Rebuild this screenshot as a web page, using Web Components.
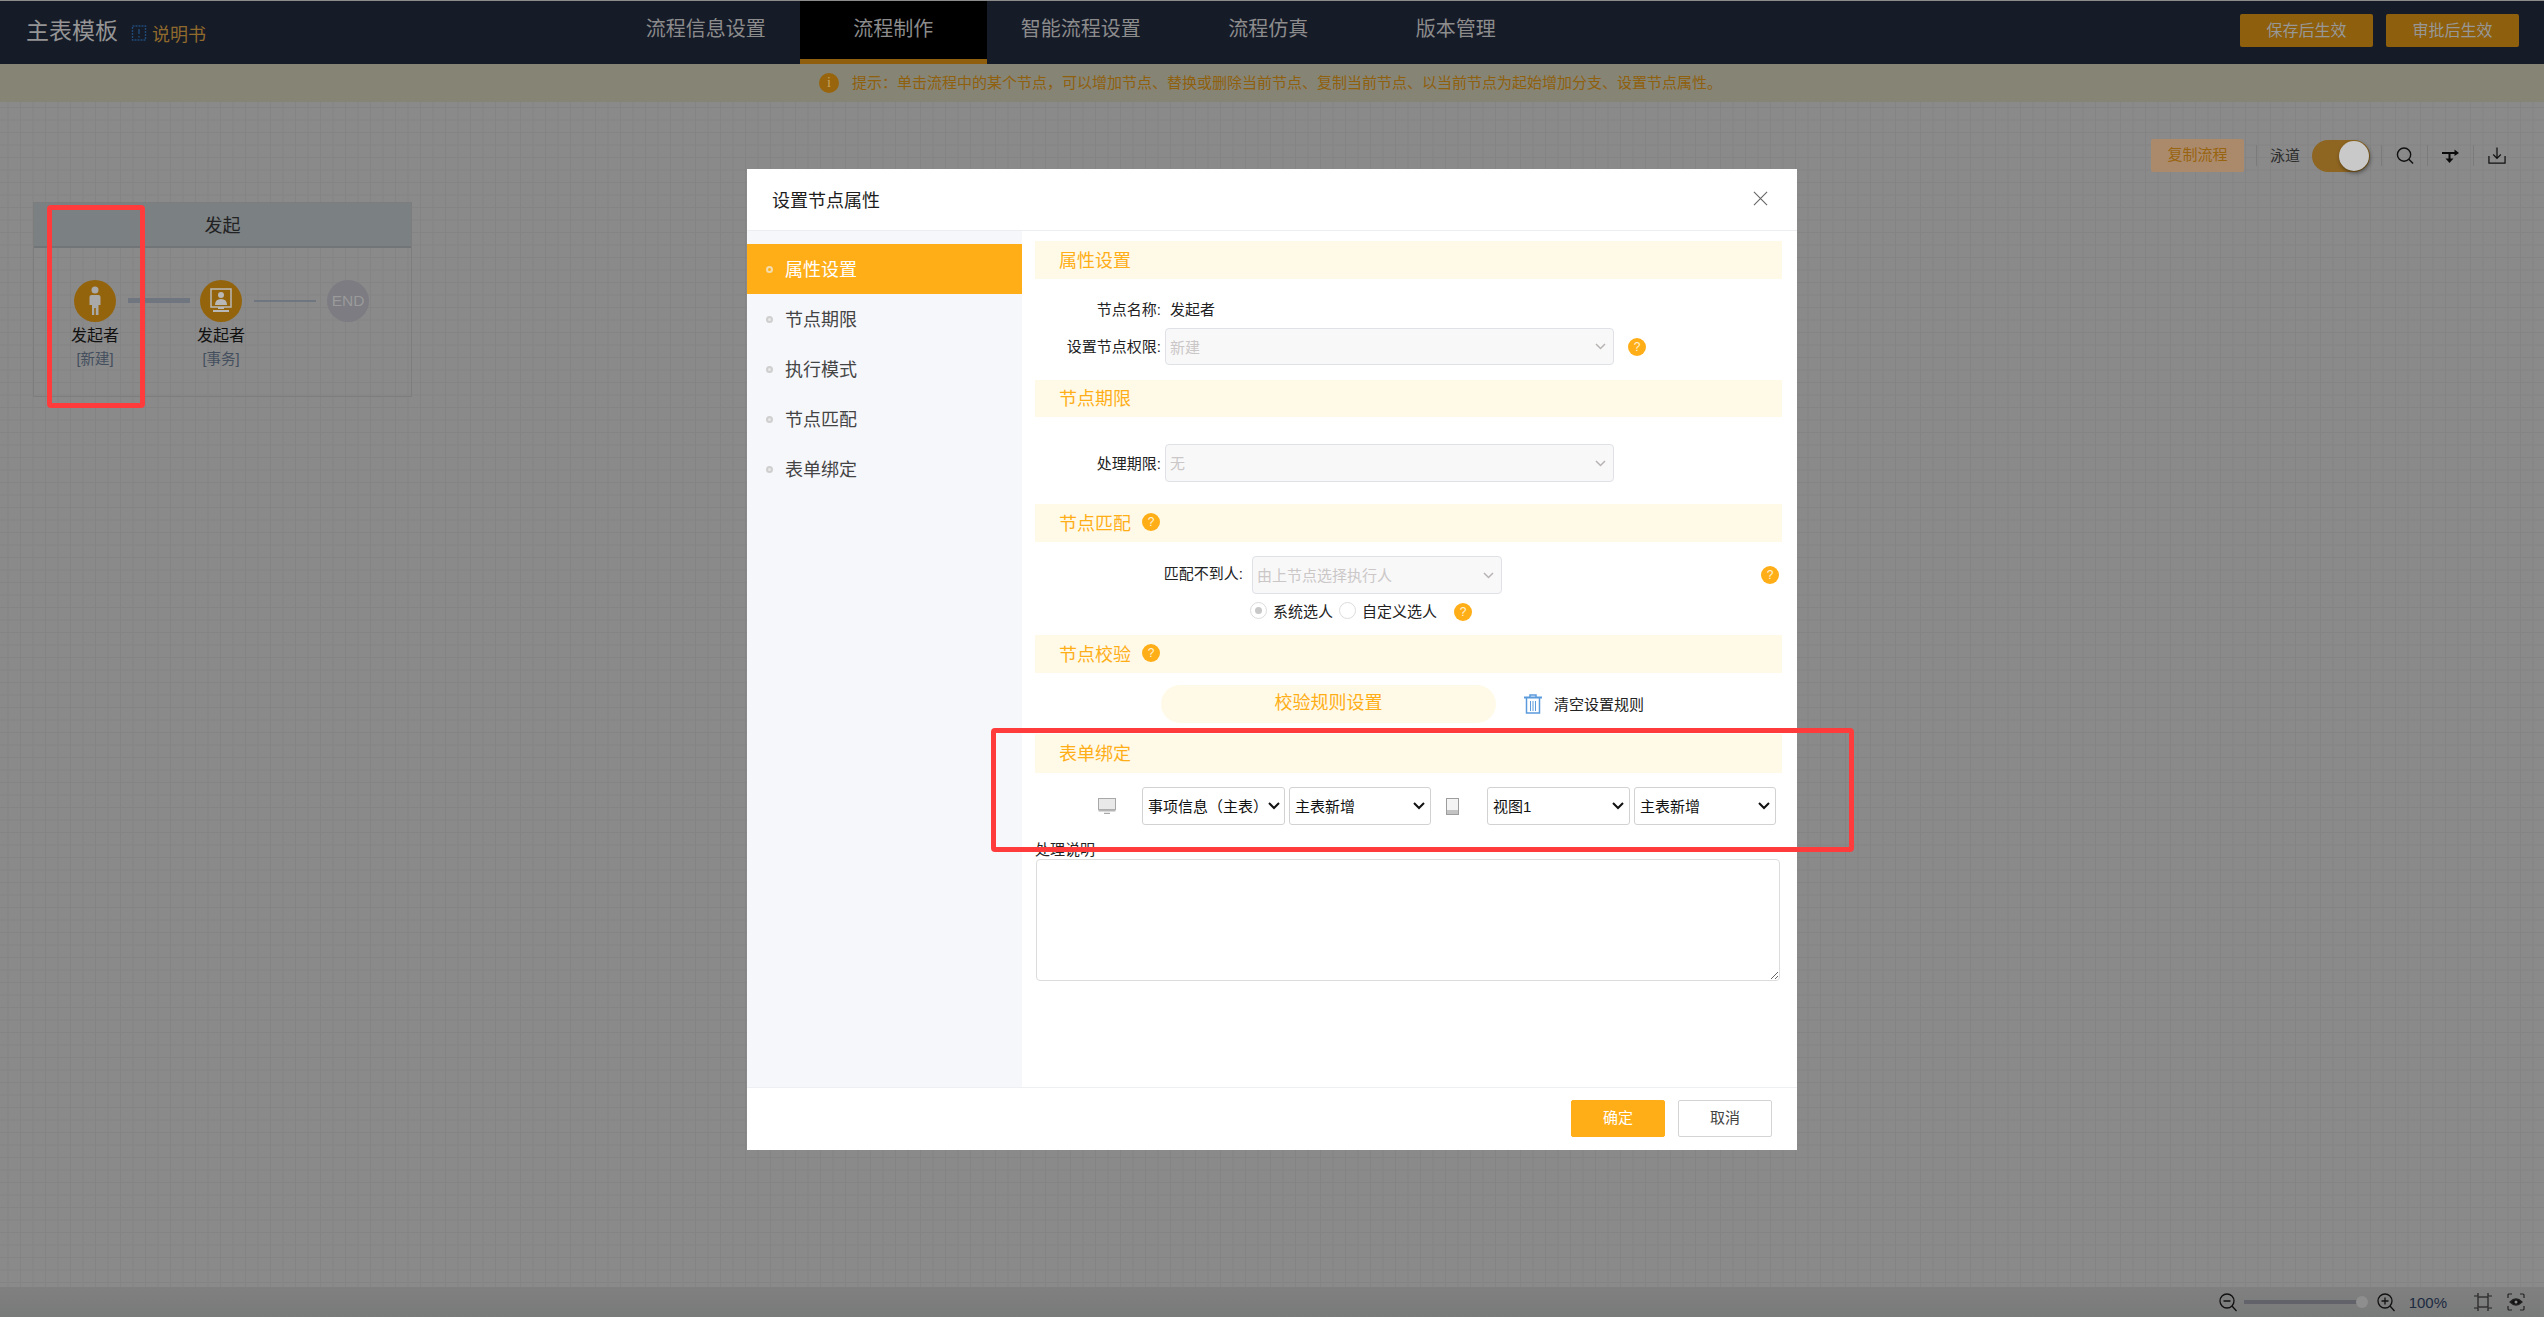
<!DOCTYPE html>
<html lang="zh-CN">
<head>
<meta charset="utf-8">
<title>设置节点属性</title>
<style>
html,body{margin:0;padding:0;height:100%;overflow:hidden;background:#8a8a8a}
body{font-family:"Liberation Sans","Noto Sans CJK SC",sans-serif;font-size:15px;color:#222}
</style>
</head>
<body>
<x-app>
  <x-topbar></x-topbar>
  <x-notice>提示：单击流程中的某个节点，可以增加节点、替换或删除当前节点、复制当前节点、以当前节点为起始增加分支、设置节点属性。</x-notice>
  <x-canvas>
    <x-toolbar></x-toolbar>
    <x-lane title-text="发起"></x-lane>
  </x-canvas>
  <x-statusbar></x-statusbar>

  <x-dialog heading="设置节点属性">
    <x-side-item slot="side" active>属性设置</x-side-item>
    <x-side-item slot="side">节点期限</x-side-item>
    <x-side-item slot="side">执行模式</x-side-item>
    <x-side-item slot="side">节点匹配</x-side-item>
    <x-side-item slot="side">表单绑定</x-side-item>

    <x-section style="margin-top:10px;height:38px">属性设置</x-section>
    <x-row label="节点名称:" style="margin-top:20px;height:20px"><span style="margin-left:5px;position:relative;top:-1px">发起者</span></x-row>
    <x-row label="设置节点权限:" style="margin-top:9px;height:37px">
      <x-select disabled style="width:449px">新建</x-select>
      <x-help style="margin-left:14px"></x-help>
    </x-row>

    <x-section style="margin-top:15px;height:37px">节点期限</x-section>
    <x-row label="处理期限:" style="margin-top:27px;height:38px">
      <x-select disabled style="width:449px">无</x-select>
    </x-row>

    <x-section style="margin-top:22px;height:38px" help>节点匹配</x-section>
    <x-row label="匹配不到人:" label-up style="margin-top:14px;height:38px;--lw:208px;--lg:9px">
      <x-select disabled style="width:250px">由上节点选择执行人</x-select>
      <x-help style="margin-left:auto;margin-right:3px"></x-help>
    </x-row>
    <x-radio-row style="margin-top:7px"></x-radio-row>

    <x-section style="margin-top:16px;height:38px" help>节点校验</x-section>
    <x-rule-row style="margin-top:12px"></x-rule-row>

    <x-section style="margin-top:11px;height:39px">表单绑定</x-section>
    <x-bind-row style="margin-top:14px"></x-bind-row>
    <x-note-field style="margin-top:16px" label="处理说明"></x-note-field>

    <x-dialog-btn slot="footer" primary>确定</x-dialog-btn>
    <x-dialog-btn slot="footer">取消</x-dialog-btn>
  </x-dialog>

  <x-mark style="left:47px;top:205px;width:98px;height:203px"></x-mark>
  <x-mark style="left:991px;top:728px;width:863px;height:124px"></x-mark>
</x-app>

<script>
function define(name, css, html, init){
  customElements.define(name, class extends HTMLElement{
    connectedCallback(){
      if(this.shadowRoot) return;
      const root = this.attachShadow({mode:'open'});
      root.innerHTML = '<style>'+css+'</style>'+(typeof html==='function'?html(this):html);
      if(init) init(this, root);
    }
  });
}

define('x-app', `:host{display:flex;flex-direction:column;position:relative;width:2544px;height:1317px;overflow:hidden}`, `<slot></slot>`);

define('x-topbar', `
  :host{display:flex;flex:none;height:63px;border-top:1px solid #8c8c8c;background:#161b28;color:#8c8c8c}
  .brand{flex:none;width:612px;box-sizing:border-box;padding-left:26px;display:flex;align-items:center}
  .title{font-size:23px;line-height:57px;height:60px;color:#959595}
  .doc{display:flex;align-items:center;margin-left:13px;color:#8f6a2c;font-size:18px;gap:5px;margin-top:1px}
  .tabs{display:flex;flex:none}
  .tab{width:187.5px;box-sizing:border-box;text-align:center;font-size:20px;line-height:57px;height:63px}
  .tab.on{background:#000;border-bottom:5px solid #8f5f0e}
  .acts{margin-left:auto;padding-right:25px;padding-top:13px;display:flex;gap:13px}
  .act{width:133px;height:33px;line-height:33px;text-align:center;background:#8e5f0c;border-radius:2px;font-size:16px;color:#979797}
`, `
  <div class="brand"><span class="title">主表模板</span>
    <span class="doc"><svg width="16" height="18" viewBox="0 0 16 18" fill="none" stroke="#1f4a78" stroke-width="1.4"><rect x="1.5" y="2" width="13" height="14" stroke-dasharray="2 1"/><path d="M8 5v5M8 12v1.5"/></svg>说明书</span></div>
  <div class="tabs"><div class="tab">流程信息设置</div><div class="tab on">流程制作</div><div class="tab">智能流程设置</div><div class="tab">流程仿真</div><div class="tab">版本管理</div></div>
  <div class="acts"><div class="act">保存后生效</div><div class="act">审批后生效</div></div>
`);

define('x-notice', `
  :host{display:flex;flex:none;height:38px;align-items:center;justify-content:flex-start;padding-left:819px;box-sizing:border-box;background:#868475;color:#8f600d;font-size:15px;white-space:nowrap}
  .i{width:20px;height:20px;border-radius:50%;background:#98650d;color:#c9a45e;font-size:14px;line-height:20px;text-align:center;margin-right:13px;font-family:"Liberation Serif",serif}
  .t{margin-top:-3px}
`, `<span class="i">i</span><span class="t"><slot></slot></span>`);

define('x-canvas', `
  :host{display:block;flex:1;min-height:0;box-sizing:border-box;padding-top:37px;background-color:#8a8a8a;
    background-image:linear-gradient(#848484 1px,transparent 1px),linear-gradient(90deg,#848484 1px,transparent 1px);
    background-size:12.5px 12.5px;background-position:7.5px 5px}
`, `<slot></slot>`);

define('x-toolbar', `
  :host{display:flex;height:33px;align-items:center;padding-right:38px;justify-content:flex-end;color:#2d2d2d}
  .copy{width:93px;height:33px;line-height:31px;text-align:center;background:#ab8a6c;border-radius:2px;color:#99640f;font-size:15px}
  .sep{width:1px;height:21px;background:#7b7b7b}
  .lb{font-size:15px;margin:-2px 12px 0 13px;width:30px;white-space:nowrap}
  .tg{position:relative;width:58px;height:32px;border-radius:16px;background:#8f6621}
  .kn{position:absolute;right:1px;top:1px;width:30px;height:30px;border-radius:50%;background:#c9c9c9;box-shadow:1px 2px 4px rgba(0,0,0,.45)}
  svg{display:block;flex:none}
`, `
  <div class="copy">复制流程</div><div class="sep" style="margin-left:12px"></div>
  <span class="lb">泳道</span>
  <div class="tg"><div class="kn"></div></div>
  <div class="sep" style="margin-left:11px"></div>
  <svg style="margin:0 13px 0 14px" width="18" height="20" viewBox="0 0 19 20" fill="none" stroke="#101010" stroke-width="1.5"><circle cx="8.5" cy="8.5" r="7"/><path d="M13.5 13.5L18 18"/></svg>
  <div class="sep"></div>
  <svg style="margin:0 13px 0 14px" width="18" height="16" viewBox="0 0 18 16" fill="none" stroke="#0a0a0a" stroke-width="2"><path d="M0 5h15"/><path d="M12.5 1.5L17 5l-4.500 3z" fill="#0a0a0a" stroke="none"/><path d="M7.500 5v8"/><path d="M3.500 10.500L7.500 15l4-4.500z" fill="#0a0a0a" stroke="none"/></svg>
  <div class="sep"></div>
  <svg style="margin:0 0 0 14px" width="18" height="19" viewBox="0 0 19 19" fill="none" stroke="#101010" stroke-width="1.3"><path d="M1 10v7.500h17V10"/><path d="M9.500 1v11M5.500 8.500l4 4 4-4"/></svg>
`);

define('x-lane', `
  :host{display:block;width:379px;height:195px;box-sizing:border-box;margin:30px 0 0 33px;border:1px solid #7d7d7d}
  .h{height:43px;line-height:46px;text-align:center;background:#7b8083;border-bottom:2px solid #717577;font-size:18px;color:#222}
  .b{display:flex;align-items:flex-start;padding:32px 0 0 40px}
  .l{flex:none;background:#6f7680}
  .n{flex:none;width:42px;display:flex;flex-direction:column;align-items:center;white-space:nowrap}
  .c{width:42px;height:42px;border-radius:50%;background:#94640c;display:flex;align-items:center;justify-content:center}
  .c.e{background:#7c7c82;color:#9a9a9a;font-size:15.500px}
  .t{font-size:16px;line-height:22px;margin-top:3px;color:#111}
  .s{font-size:14.500px;line-height:20px;margin-top:2px;color:#444f5e}
`, h=>`
  <div class="h">${h.getAttribute('title-text')}</div>
  <div class="b">
    <div class="n"><div class="c"><svg width="16" height="30" viewBox="0 0 16 30" fill="#a9a9a9"><circle cx="8" cy="4" r="3.500"/><path d="M4.500 9h7q2 0 2 2v8h-2v10H8.800v-7H7.200v7H5V19H2.500v-8q0-2 2-2z"/></svg></div><div class="t">发起者</div><div class="s">[新建]</div></div>
    <div class="l" style="width:62px;height:5px;margin:18px 10px 0 12px"></div>
    <div class="n"><div class="c"><svg width="28" height="28" viewBox="0 0 28 28" fill="none"><rect x="4" y="2" width="20" height="18" stroke="#b8b8b8" stroke-width="1.5"/><circle cx="14" cy="8" r="3" fill="#b8b8b8"/><path d="M8 18q0-6 6-6t6 6z" fill="#b8b8b8"/><path d="M11 20h6v2h-6zM6 23h16v2H6z" fill="#b8b8b8"/></svg></div><div class="t">发起者</div><div class="s">[事务]</div></div>
    <div class="l" style="width:62px;height:2px;margin:20px 11px 0 12px"></div>
    <div class="n"><div class="c e">END</div></div>
  </div>
`);

define('x-statusbar', `
  :host{display:flex;flex:none;height:30px;align-items:center;justify-content:flex-end;padding-right:19px;box-sizing:border-box;background:linear-gradient(#808080,#797a7a)}
  svg{display:block;flex:none}
  .sl{position:relative;width:113px;height:4px;background:#62626a;margin:0 7px 0 7px}
  .kn{position:absolute;right:-11px;top:-4px;width:12px;height:12px;border-radius:50%;background:#8e8e8e}
  .v{font-size:15px;color:#1c2a42;margin:0 27px 0 14px;font-family:"Liberation Sans",sans-serif}
`, `
  <svg width="18" height="19" viewBox="0 0 18 19" fill="none" stroke="#111" stroke-width="1.300"><circle cx="8" cy="8" r="7"/><path d="M4.500 8h7M13 13l4.500 5"/></svg>
  <div class="sl"><div class="kn"></div></div>
  <svg style="margin-left:13px" width="18" height="19" viewBox="0 0 18 19" fill="none" stroke="#111" stroke-width="1.300"><circle cx="8" cy="8" r="7"/><path d="M4.500 8h7M8 4.500v7M13 13l4.500 5"/></svg>
  <span class="v">100%</span>
  <svg width="18" height="18" viewBox="0 0 18 18" fill="none" stroke="#222" stroke-width="1.200"><rect x="4" y="4" width="10" height="10"/><path d="M4 0v3H0M14 0v3h4M4 18v-3H0M14 18v-3h4"/></svg>
  <svg style="margin-left:15px" width="18" height="18" viewBox="0 0 18 18" fill="none" stroke="#222" stroke-width="1.200"><path d="M1 5V2q0-1 1-1h3M13 1h3q1 0 1 1v3M1 13v3q0 1 1 1h3M17 13v3q0 1-1 1h-3"/><path d="M3 9q6-6 12 0q-6 6-12 0z" fill="#111"/><circle cx="9" cy="9" r="1.500" fill="#8a8a8a" stroke="none"/></svg>
`);

define('x-dialog', `
  :host{position:absolute;left:747px;top:169px;width:1050px;height:981px;background:#fff;display:flex;flex-direction:column;color:#222}
  .head{flex:none;height:61px;display:flex;align-items:center;justify-content:space-between;padding:0 29px 0 26px;border-bottom:1px solid #eceef2;font-size:18px;color:#1c1c1c}
  .head span{margin:-2px 0 0 -1px}
  .head svg{margin-top:-2px;width:15px;height:15px}
  .body{flex:1;min-height:0;display:flex}
  .side{flex:none;width:275px;box-sizing:border-box;padding-top:13px;background:#f6f7fb}
  .main{flex:1;min-width:0;padding:0 15px 0 13px;display:flex;flex-direction:column}
  .foot{flex:none;height:63px;border-top:1px solid #eeeff2;display:flex;justify-content:flex-end;gap:13px;padding:12px 25px 0 0;box-sizing:border-box}
  svg{display:block}
`, h=>`
  <div class="head"><span>${h.getAttribute('heading')}</span>
    <svg width="16" height="16" viewBox="0 0 16 16" fill="none" stroke="#666" stroke-width="1.200"><path d="M1 1l14 14M15 1L1 15"/></svg></div>
  <div class="body"><div class="side"><slot name="side"></slot></div><div class="main"><slot></slot></div></div>
  <div class="foot"><slot name="footer"></slot></div>
`);

define('x-side-item', `
  :host{display:flex;align-items:center;height:50px;padding-left:19px;font-size:18px;color:#444}
  :host([active]){background:#ffae18;color:#fff}
  .d{width:7px;height:7px;border-radius:50%;box-sizing:border-box;border:2px solid #cfcfcf;background:#e8e8e8;margin-right:12px}
  :host([active]) .d{border-color:#f3dcae;background:#ffae18}
  .t{margin-top:-2px}
`, `<span class="d"></span><span class="t"><slot></slot></span>`);

define('x-section', `
  :host{display:flex;flex:none;align-items:center;box-sizing:border-box;padding-left:24px;background:#fffae8;color:#ffae18;font-size:18px}
  .t{margin-top:-3px}
  x-help{margin:-2px 0 0 11px}
`, h=>`<span class="t"><slot></slot></span>${h.hasAttribute('help')?'<x-help></x-help>':''}`);

define('x-help', `
  :host{display:inline-block;flex:none;width:18px;height:18px;border-radius:50%;background:#ffae18;color:#fff3d6;font-size:12px;line-height:18px;text-align:center}
`, `?`);

define('x-row', `
  :host{display:flex;flex:none;align-items:center}
  .lb{flex:none;width:var(--lw,126px);margin-right:var(--lg,4px);text-align:right;font-size:15px;color:#222;white-space:nowrap;margin-top:-2px}
  :host([label-up]) .lb{padding-bottom:4px}
`, h=>`<span class="lb">${h.getAttribute('label')}</span><slot></slot>`);

define('x-select', `
  :host{display:flex;flex:none;align-items:center;justify-content:space-between;box-sizing:border-box;height:38px;padding:0 5px;background:#fff;border:1px solid #d2d2d2;border-radius:3px;font-size:15px;color:#111;white-space:nowrap}
  :host([disabled]){height:100%;padding:0 7px 0 4px;background:#f8f8f9;border-color:#dfe1e6;border-radius:4px;color:#cbc7c7}
  svg{display:block;flex:none}
  span{margin-top:-1px}
`, h=>h.hasAttribute('disabled')
  ? `<span><slot></slot></span><svg width="11" height="7" viewBox="0 0 11 7" fill="none" stroke="#b8b3b3" stroke-width="1.500"><path d="M1 1l4.500 4.500L10 1"/></svg>`
  : `<span><slot></slot></span><svg width="12" height="8" viewBox="0 0 12 8" fill="none" stroke="#111" stroke-width="2"><path d="M1 1l5 5 5-5"/></svg>`);

define('x-radio-row', `
  :host{display:flex;flex:none;align-items:center;height:18px;padding-left:215px;font-size:15px;color:#222;white-space:nowrap}
  .r{width:17px;height:17px;box-sizing:border-box;border-radius:50%;border:1px solid #dcdcdc;background:#fff;display:flex;align-items:center;justify-content:center;margin-right:6px}
  .r i{width:7px;height:7px;border-radius:50%;background:#c8c8c8}
  x-help{margin:4px 0 0 17px}
`, `<span class="r"><i></i></span><span style="margin-right:6px">系统选人</span><span class="r"></span><span>自定义选人</span><x-help></x-help>`);

define('x-rule-row', `
  :host{display:flex;flex:none;align-items:center;height:38px;padding-left:126px;font-size:15px;color:#222}
  .p{width:335px;height:38px;line-height:37px;border-radius:19px;background:#fffae8;color:#ffae18;font-size:18px;text-align:center}
  svg{display:block;margin:0 12px 0 28px}
`, `<div class="p">校验规则设置</div>
  <svg width="18" height="20" viewBox="0 0 18 20" fill="none" stroke="#5b9bdc" stroke-width="1.500"><path d="M0 3.500h18" stroke-width="2"/><path d="M6 3V1h6v2"/><path d="M2.500 4v15h13V4"/><path d="M6.500 7v10M9 7v10M11.500 7v10" stroke-width="1"/></svg>
  <span style="margin-top:-2px">清空设置规则</span>`);

define('x-bind-row', `
  :host{display:flex;flex:none;align-items:center;height:38px;padding-left:63px}
  svg{display:block;flex:none}
  x-select+x-select{margin-left:4px}
`, `
  <svg width="18" height="16" viewBox="0 0 18 16" fill="#e9e9e9" stroke="#a8a8a8" stroke-width="1"><rect x=".5" y=".5" width="17" height="11"/><path d="M.5 11.500h17v2H.5z" fill="#b5b5b5" stroke="none"/><path d="M6 15.500h6" stroke-width="1.500"/></svg>
  <x-select style="margin-left:26px;width:143px">事项信息（主表）</x-select>
  <x-select style="width:142px">主表新增</x-select>
  <svg style="margin:0 28px 0 15px" width="13" height="17" viewBox="0 0 13 17" fill="#f4f4f4" stroke="#9d9d9d" stroke-width="1"><rect x=".5" y=".5" width="12" height="16"/><path d="M1 12h11v4H1z" fill="#c3c3c3" stroke="none"/></svg>
  <x-select style="width:143px">视图1</x-select>
  <x-select style="width:142px">主表新增</x-select>
`);

define('x-note-field', `
  :host{display:block;flex:none;font-size:15px;color:#222}
  .lb{display:block;line-height:18px;height:18px}
  textarea{display:block;box-sizing:border-box;width:744px;height:122px;margin:0 0 0 1px;border:1px solid #dcdcdc;border-radius:4px;background:#fff;outline:none;font:inherit}
`, h=>`<span class="lb">${h.getAttribute('label')}</span><textarea></textarea>`);

define('x-dialog-btn', `
  :host{display:block;flex:none;box-sizing:border-box;width:94px;height:37px;line-height:33px;text-align:center;border:1px solid #d4d4d4;border-radius:2px;background:#fff;color:#444;font-size:15px}
  :host([primary]){background:#ffae18;border-color:#ffae18;color:#fff}
`, `<slot></slot>`);

define('x-mark', `
  :host{position:absolute;box-sizing:border-box;border:5px solid #ff3b3b;border-radius:4px;pointer-events:none}
`, ``);
</script>
</body>
</html>
